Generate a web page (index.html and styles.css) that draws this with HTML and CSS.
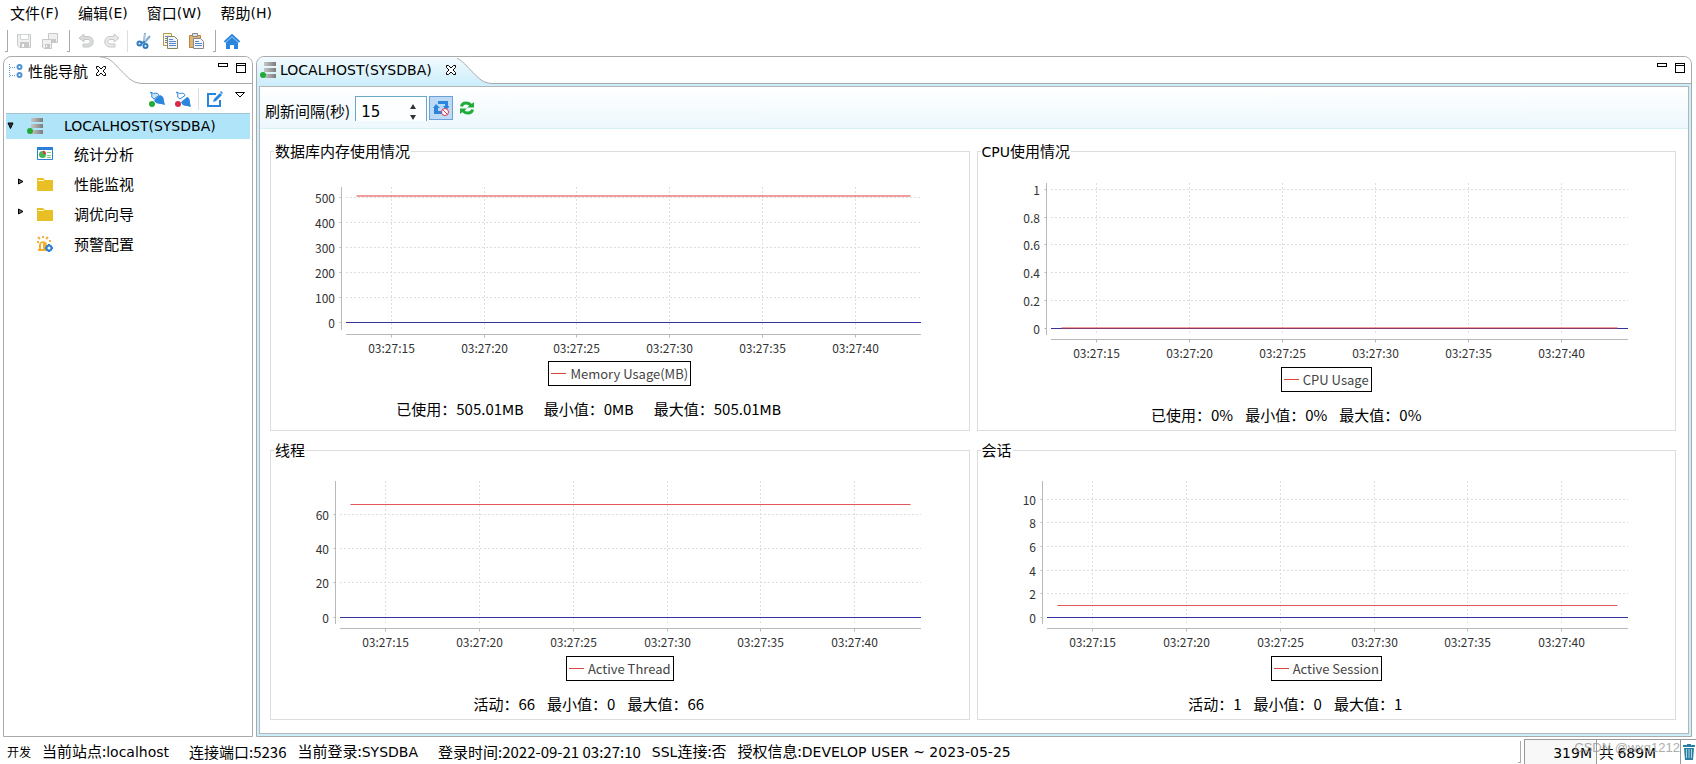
FILE: index.html
```html
<!DOCTYPE html>
<html lang="zh-CN">
<head>
<meta charset="utf-8">
<title>性能监视</title>
<link rel="stylesheet" href="styles.css">
</head>
<body>
<svg class="defs" aria-hidden="true">
  <defs>
    <linearGradient id="metal" x1="0" x2="1"><stop offset="0" stop-color="#c6c6c6"/><stop offset="1" stop-color="#7c7c7c"/></linearGradient>
    <linearGradient id="tabfill" x1="0" x2="0" y1="0" y2="1"><stop offset="0" stop-color="#f4fbfe"/><stop offset="1" stop-color="#cdeefb"/></linearGradient>
    <symbol id="server" viewBox="0 0 16 16"><path fill="url(#metal)" d="M4 0h12v4H4zM4 6h12v4H4zM4 12h12v4H4z"/><circle cx="3" cy="13" r="3" fill="#22ab38"/></symbol>
    <symbol id="close" viewBox="0 0 12 12"><path fill="#fff" stroke="#000" d="M1.500 1.500h2L6 4l2.500-2.500h2v2L8 6l2.500 2.500v2h-2L6 8l-2.500 2.500h-2v-2L4 6 1.500 3.500z"/></symbol>
    <symbol id="minmax" viewBox="0 0 28 12"><g fill="none" stroke="#000" shape-rendering="crispEdges"><path d="M.5 1.500h9v3h-9zM18.500 1.500h9v9h-9zM18.500 3.500h9"/></g></symbol>
    <symbol id="folder" viewBox="0 0 16 14"><path fill="#e8bf24" d="M0 1h6l2 2h8v11H0z"/><path d="M1 3.500h6" stroke="#fff6c8"/></symbol>
  </defs>
</svg>

<nav class="menubar">
  <button>文件<span class="lat">(F)</span></button>
  <button>编辑<span class="lat">(E)</span></button>
  <button>窗口<span class="lat">(W)</span></button>
  <button>帮助<span class="lat">(H)</span></button>
</nav>

<div class="toolbar">
  <span class="grip"></span>
  <button aria-label="保存" disabled><svg viewBox="0 0 16 16"><path fill="#f0f0f0" stroke="#c6c8c9" d="M1.500 1.500h13v13h-11l-2-2z"/><path fill="#fff" stroke="#d2d4d5" d="M4.500 1.500h8v5h-8z"/><path fill="#c6c8c9" d="M4 9h9v6H4z"/><path fill="#fff" d="M6 11h2v3H6z"/></svg></button>
  <button aria-label="全部保存" disabled><svg viewBox="0 0 16 16"><path fill="#f0f0f0" stroke="#c6c8c9" d="M6.500.5h9v9h-9z"/><path fill="#c6c8c9" d="M8 6h6v3H8z"/><path fill="#f0f0f0" stroke="#c6c8c9" d="M.5 6.500h9v9H2l-1.500-1.500z"/><path fill="#c6c8c9" d="M3 11h5v4H3z"/><path fill="#fff" d="M4 12h1v2H4z"/></svg></button>
  <span class="grip"></span>
  <button aria-label="撤销" disabled><svg viewBox="0 0 16 16"><path fill="#d9dbdc" stroke="#c6c8c9" d="M1 5l5-4v2.500h4c7 0 7 10.500 0 10.500H5v-3h5c3 0 3-4.500 0-4.500H6V9z"/></svg></button>
  <button aria-label="重做" disabled><svg viewBox="0 0 16 16"><path fill="#e8eaeb" stroke="#c6c8c9" d="M15 5l-5-4v2.500H6c-7 0-7 10.500 0 10.500h5v-3H6c-3 0-3-4.500 0-4.500h4V9z"/></svg></button>
  <span class="sep"></span>
  <button aria-label="剪切"><svg viewBox="0 0 16 16"><path d="M8 9l1-9M9 9l5-6" stroke="#7fa9cd" stroke-width="2"/><path d="M9 1v7" stroke="#d6e4f0"/><circle cx="3.500" cy="10.500" r="2" fill="none" stroke="#2f7dc1" stroke-width="2"/><circle cx="9.500" cy="13" r="2" fill="none" stroke="#2f7dc1" stroke-width="2"/><path d="M5 10l4-1" stroke="#2f7dc1" stroke-width="2"/></svg></button>
  <button aria-label="复制"><svg viewBox="0 0 16 16"><path fill="#fdf6dc" stroke="#b39a55" d="M1.500.5h8v12h-8z"/><path fill="#eef5fc" stroke="#8a8354" d="M5.500 3.500h7l3 3v9h-10z"/><path stroke="#5a86c4" d="M7 6.500h4M7 8.500h7M7 10.500h7M7 12.500h7M3 3.500h4M3 5.500h2M3 7.500h2M3 9.500h2"/></svg></button>
  <button aria-label="粘贴"><svg viewBox="0 0 16 16"><path fill="#e3b36e" stroke="#b58443" d="M1.500 2.500h11v12h-11z"/><path fill="#dfe3e6" stroke="#888" d="M4.500.5h5v3h-5z"/><path fill="#f3f7fc" stroke="#86888c" d="M5.500 5.500h7l3 3v7h-10z"/><path stroke="#5a86c4" d="M7 8.500h4M7 10.500h7M7 12.500h7"/></svg></button>
  <span class="grip"></span>
  <button aria-label="主页"><svg viewBox="0 0 16 16"><path fill="#2a86dc" d="M8 4l6 5.500V16h-4v-4H6v4H2V9.500z"/><path fill="none" stroke="#2a86dc" stroke-width="2" d="M.5 9L8 2l7.500 7"/></svg></button>
</div>

<main class="workbench">
  <section class="view nav-view">
    <header class="tabs">
      <div class="tab">
        <svg class="i16" viewBox="0 0 16 16"><path fill="none" stroke="#5e9bd6" stroke-dasharray="1 1" d="M1.500 1v13M2 4.500h6M2 12.500h6"/><g fill="#fff" stroke="#4f93d6" stroke-width="2"><circle cx="11.500" cy="4" r="2"/><circle cx="11.500" cy="12" r="2"/></g></svg>
        <span>性能导航</span>
        <button aria-label="关闭"><svg class="i12"><use href="#close"/></svg></button>
      </div>
      <svg class="curve" viewBox="0 0 42 27"><path fill="none" stroke="#aaa" d="M0 0C11 0 15 8 21 13.500S31 26 42 26.500"/></svg>
      <div class="rest"><svg class="minmax"><use href="#minmax"/></svg></div>
    </header>
    <div class="view-tools">
      <button aria-label="连接"><svg viewBox="0 0 16 16"><path fill="#cfe3f6" stroke="#2a86dc" d="M1.500 1l3 1.500c3-1 5 0 5.500 2L5 8C3 7 2 5 3 4z"/><path fill="#2a86dc" d="M5 9l6-5c3 1 4 3 4 6l1 4-4-1c-3 0-6-1-7-4z"/><circle cx="3" cy="13" r="3" fill="#22ab38"/></svg></button>
      <button aria-label="断开"><svg viewBox="0 0 16 16"><path fill="#fff" stroke="#2a86dc" d="M1.500 1l3 1.500c3-1 5 0 5.500 2L5 8C3 7 2 5 3 4z"/><path fill="#2a86dc" d="M6 11l6-5c3 1 3 4 3 6l1 4-4-1c-3 0-5-1-6-4z"/><circle cx="3" cy="13" r="3" fill="#d62a4c"/></svg></button>
      <span class="sep"></span>
      <button aria-label="编辑"><svg viewBox="0 0 16 16"><path fill="none" stroke="#2a86dc" stroke-width="2" d="M9 3H1v12h12V9"/><path d="M6 11l1-3 6-6 2 2-6 6z" fill="#2a86dc"/><path d="M14 0l2 2-1 1-2-2z" fill="#2a86dc"/></svg></button>
      <button class="menu" aria-label="菜单"><svg viewBox="0 0 10 6"><path fill="#fff" stroke="#000" d="M.5.5h9L5 5z"/></svg></button>
    </div>
    <ul class="tree">
      <li class="root"><svg class="arrow" viewBox="0 0 8 8"><path fill="#333" stroke="#000" d="M1 1h5L3.500 6.500z"/></svg><svg class="i16"><use href="#server"/></svg><span class="lat">LOCALHOST(SYSDBA)</span></li>
      <li><span class="arrow"></span><svg class="i16" viewBox="0 0 16 16"><path fill="#fff" stroke="#2a80d8" d="M.5 1.500h15v12H.5z"/><path fill="#2a80d8" d="M0 1h16v3H0z"/><circle cx="5.500" cy="8.500" r="3.500" fill="#45b754"/><path fill="#dc3c50" d="M6 8V4.500A3.500 3.500 0 0 1 9 8z"/><path stroke="#7bd07b" d="M10 6.500h4M10 9.500h4M10 11.500h4"/></svg>统计分析</li>
      <li><svg class="arrow" viewBox="0 0 8 8"><path fill="#666" stroke="#000" d="M1.500 1v5L6 3.500z"/></svg><svg class="i16" viewBox="0 0 16 14"><use href="#folder"/></svg>性能监视</li>
      <li><svg class="arrow" viewBox="0 0 8 8"><path fill="#666" stroke="#000" d="M1.500 1v5L6 3.500z"/></svg><svg class="i16" viewBox="0 0 16 14"><use href="#folder"/></svg>调优向导</li>
      <li><span class="arrow"></span><svg class="i16" viewBox="0 0 16 16"><path fill="#f5ae2b" d="M2 13V9c0-5 8-5 8 0v4h1v2H1v-2z"/><path fill="#fff" d="M4 9c0-2 1-2 2-2v6H4z"/><path stroke="#f0b040" stroke-width="2" d="M6 0v2M1 1l2 2M11 1L9 3M0 6h2M12 5h2"/><circle cx="12" cy="12" r="2.500" fill="#fff" stroke="#2a80d8" stroke-width="2"/><path stroke="#2a80d8" stroke-width="2" d="M12 8v2M12 14v2M8 12h2M14 12h2"/></svg>预警配置</li>
    </ul>
  </section>

  <section class="view editor">
    <header class="tabs">
      <div class="tab">
        <svg class="i16"><use href="#server"/></svg>
        <span class="lat">LOCALHOST(SYSDBA)</span>
        <button aria-label="关闭"><svg class="i12"><use href="#close"/></svg></button>
      </div>
      <svg class="curve" viewBox="0 0 42 27"><path fill="url(#tabfill)" d="M0 0C11 0 15 8 21 13.500S31 26 42 26.500V27H0z"/><path fill="none" stroke="#aaa" d="M0 0C11 0 15 8 21 13.500S31 26 42 26.500"/></svg>
      <div class="rest"><svg class="minmax"><use href="#minmax"/></svg></div>
    </header>
    <div class="editor-body">
      <div class="refresh-bar">
        <label for="interval">刷新间隔(秒)</label>
        <span class="spinner"><input id="interval" type="number" value="15"><svg viewBox="0 0 6 16"><path fill="#333" d="M3 0l3 5H0zM3 16l3-5H0z"/></svg></span>
        <button class="toggle" aria-label="停止自动刷新"><svg viewBox="0 0 16 16"><path fill="#2a86dc" d="M5 1h10v5h2l-4 4-3-4h2V4H5zM0 8l3-4 4 4H5v3h4v3H1V8z"/><circle cx="12" cy="12" r="3.500" fill="#fff" stroke="#d8344e"/><path stroke="#d8344e" d="M9.500 9.500l5 5"/></svg></button>
        <button aria-label="刷新"><svg viewBox="0 0 14 14"><g fill="none" stroke="#22ab38" stroke-width="3"><path d="M1.500 5.500C2 2.500 4 2 6 2c3 0 4 1 5 2.500M12.500 8.500C12 11.500 10 12 8 12c-3 0-4-1-5-2.500"/></g><path fill="#22ab38" d="M7 6.500h7V1zM7 7.500H0V13z"/></svg></button>
      </div>
      <div class="panels">
        <fieldset><legend>数据库内存使用情况</legend>
          <svg class="chart" data-chart="memory"></svg>
          <div class="key"><i></i>Memory Usage(MB)</div>
          <p class="stats wide"><span>已使用：505.01<span class="lat">MB</span></span><span>最小值：0<span class="lat">MB</span></span><span>最大值：505.01<span class="lat">MB</span></span></p>
        </fieldset>
        <fieldset><legend><span class="lat">CPU</span>使用情况</legend>
          <svg class="chart" data-chart="cpu"></svg>
          <div class="key"><i></i>CPU Usage</div>
          <p class="stats percent"><span>已使用：0%</span><span>最小值：0%</span><span>最大值：0%</span></p>
        </fieldset>
        <fieldset><legend>线程</legend>
          <svg class="chart" data-chart="thread"></svg>
          <div class="key"><i></i>Active Thread</div>
          <p class="stats"><span>活动：66</span><span>最小值：0</span><span>最大值：66</span></p>
        </fieldset>
        <fieldset><legend>会话</legend>
          <svg class="chart" data-chart="session"></svg>
          <div class="key"><i></i>Active Session</div>
          <p class="stats"><span>活动：1</span><span>最小值：0</span><span>最大值：1</span></p>
        </fieldset>
      </div>
    </div>
  </section>
</main>

<footer class="status">
  <span class="mode">开发</span>
  <span class="far">当前站点:<span class="lat">localhost</span></span>
  <span>连接端口:5236</span>
  <span class="far">当前登录:<span class="lat">SYSDBA</span></span>
  <span>登录时间:2022-09-21 03:27:10</span>
  <span><span class="lat">SSL</span>连接:否</span>
  <span>授权信息:<span class="lat">DEVELOP USER ~ 2023-05-25</span></span>
  <span class="grip end"></span>
  <div class="heap"><span class="used lat">319M</span><span class="total">共 <span class="lat">689M</span></span>
    <button aria-label="回收"><svg viewBox="0 0 12 16"><path fill="#2c7fa3" d="M4 0h4v1h4v2H0V1h4zM1 4h10l-1 12H2z"/><path stroke="#a8d4e4" d="M3.500 5v9M6 5v9M8.500 5v9"/></svg></button>
    <span class="watermark">CSDN @wxq1212</span>
  </div>
</footer>
<script src="charts.js"></script>
</body>
</html>
```
FILE: styles.css
```css
* { box-sizing: border-box; }
body {
  margin: 0;
  min-height: 100vh;
  display: flex;
  flex-direction: column;
  background: #fff;
  color: #000;
  font: 15px/22px "Noto Sans CJK SC", sans-serif;
}
.lat { font-family: "DejaVu Sans", sans-serif; font-size: 14px; }
.defs { position: absolute; width: 0; height: 0; }
button { padding: 0; border: 0; background: none; font: inherit; color: inherit; display: flex; align-items: center; }
svg { display: block; flex: none; }
.i16 { width: 16px; height: 16px; }
.i12 { width: 12px; height: 12px; }

.menubar { display: flex; gap: 19px; height: 26px; padding-left: 10px; align-items: center; }
.toolbar { display: flex; align-items: center; height: 30px; padding-left: 5px; }
.toolbar button { width: 26px; justify-content: center; }
.toolbar button svg { width: 16px; height: 16px; }
.grip { width: 3px; height: 22px; border: solid #aaa; border-width: 0 1px 1px 0; margin-right: 3px; }
.toolbar button + .grip { margin-left: 4px; }
.sep { width: 1px; height: 22px; background: #ddd; margin: 0 3px 0 2px; }

.workbench { flex: 1; display: flex; gap: 3px; padding: 0 4px 0 3px; }
.view { display: flex; flex-direction: column; border: 1px solid #aaa; border-radius: 8px 8px 0 0; overflow: hidden; }
.nav-view { width: 250px; flex: none; }
.editor { flex: 1; min-width: 0; background: #cdeefb; }
.tabs { display: flex; height: 27px; flex: none; }
.tab { position: relative; display: flex; align-items: center; gap: 4px; padding-left: 4px; }
.tab button { margin-left: 3px; }
.nav-view .tab { padding-top: 1px; }
.editor .tab { padding: 0 0 2px 3px; background: linear-gradient(#f4fbfe, #cdeefb); }
.editor .tab button { margin-left: 9px; }
.curve { width: 42px; height: 27px; margin-left: -7px; }
.editor .curve { background: #fff; }
.rest { flex: 1; border-bottom: 1px solid #aaa; background: #fff; display: flex; justify-content: flex-end; padding: 5px 6px 0 0; }
.minmax { width: 28px; height: 12px; }

.view-tools { display: flex; justify-content: flex-end; align-items: center; height: 29px; }
.view-tools button { width: 26px; justify-content: center; }
.view-tools button svg { width: 16px; height: 16px; }
.view-tools .menu { width: 24px; margin-bottom: 8px; }
.view-tools .menu svg { width: 10px; height: 6px; }

.tree { list-style: none; margin: 0 2px; padding: 0; }
.tree li { display: flex; align-items: center; height: 30px; padding-left: 11px; }
.tree .arrow { width: 8px; height: 8px; margin: 0 12px 4px 0; flex: none; }
.tree .i16 { margin-right: 21px; }
.tree .root { height: 26px; padding: 0 0 2px 1px; background: #b0e5f9; border-top: 1px solid #a3c3cf; }
.tree .root .arrow { margin-bottom: 0; }

.editor-body { flex: 1; margin: 2px; background: #fff; border: 1px solid #b5b5b5; }
.refresh-bar { display: flex; align-items: flex-start; height: 42px; padding: 9px 5px 0; border-bottom: 1px solid #d8f1f5; background: linear-gradient(#fff, #edf8fd); }
.refresh-bar label { padding-top: 4px; margin-right: 5px; }
.spinner { display: flex; align-items: center; width: 72px; height: 25px; border: solid #68a9c4; border-width: 1px 1px 0; background: #fcfeff; margin-right: 2px; }
.spinner input { width: 54px; padding: 6px 0 0 5px; border: 0; outline: 0; background: none; font: 15px/18px "DejaVu Sans", sans-serif; appearance: textfield; }
.spinner input::-webkit-inner-spin-button { display: none; }
.spinner svg { width: 6px; height: 16px; margin-top: 5px; }
.refresh-bar .toggle { width: 24px; height: 24px; margin-right: 7px; justify-content: center; border: 1px solid #6da0d6; background: #bcd9f5; }
.refresh-bar button svg { width: 16px; height: 16px; }
.refresh-bar button:last-child { height: 24px; }
.refresh-bar button:last-child svg { width: 14px; height: 14px; }

.panels { display: grid; grid-template-columns: 1fr 1fr; column-gap: 7px; row-gap: 8px; padding: 11px 12px 12px 10px; }
fieldset { min-width: 0; margin: 0; padding: 0 0 4px; border: 1px solid #ddd; }
legend { padding: 0 1px; margin-left: 3px; }
.chart { width: 100%; overflow: visible; }
.chart .grid { stroke: #dedede; stroke-dasharray: 2 2; }
.chart .axis { stroke: #b9b9b9; fill: none; }
.chart .zero { stroke: #34349c; }
.chart .series { stroke: #e4565a; }
.chart .series.soft { stroke: #e23c3c; stroke-opacity: .5; stroke-width: 2; }
.chart text { font: 12px "Noto Sans CJK SC", sans-serif; fill: #333; }
.key { display: flex; align-items: center; gap: 4px; width: fit-content; height: 25px; margin: 5px auto 0; padding: 0 2px; border: 1px solid #000; color: #444; font-size: 13px; }
.key i { width: 15px; height: 1px; background: #d8473f; }
.stats { display: flex; justify-content: center; gap: 12px; margin: 12px 0 0; padding-right: 62px; }
.stats.wide { gap: 20px; }
.stats.percent { padding-right: 80px; }

.status { display: flex; align-items: center; gap: 11px; height: 27px; padding: 2px 0 0 7px; white-space: nowrap; }
.status .mode { font-size: 12px; }
.status .far { margin-right: 9px; }
.status .end { margin: 0 -8px 0 auto; }
.heap { position: relative; display: flex; align-self: stretch; align-items: center; border: solid #999; border-width: 1px 0 0 1px; }
.heap .used { width: 72px; align-self: stretch; padding: 2px 4px 0 0; text-align: right; border-right: 1px solid #999; background: #f8f8f8; }
.heap .total { width: 83px; padding-left: 2px; }
.heap button { width: 16px; align-self: stretch; border-left: 1px solid #999; }
.heap button svg { width: 12px; height: 16px; margin: 0 auto; }
.watermark { position: absolute; right: 16px; top: -2px; color: #999; opacity: .8; font: 13px/20px "Liberation Sans", sans-serif; }
```
FILE: charts.js
```javascript
const TIME = { min: 12.55, max: 43.55, ticks: [15, 20, 25, 30, 35, 40] };
const RIGHT = 48;
const CHARTS = {
  memory:  { height: 194, top: 25, bottom: 168, axis: 70, min: -30, max: 542, ticks: [0, 100, 200, 300, 400, 500], value: 505.01, soft: true },
  cpu:     { height: 199, top: 20, bottom: 172, axis: 68, min: -0.05, max: 1.045, ticks: [0, 0.2, 0.4, 0.6, 0.8, 1], value: 0, soft: true },
  thread:  { height: 190, top: 20, bottom: 163, axis: 64, min: -4, max: 79.6, ticks: [0, 20, 40, 60], value: 66 },
  session: { height: 190, top: 20, bottom: 163, axis: 64, min: -0.57, max: 11.55, ticks: [0, 2, 4, 6, 8, 10], value: 1 }
};

function line(cls, x1, y1, x2, y2) {
  return `<line class="${cls}" x1="${x1}" y1="${y1}" x2="${x2}" y2="${y2}"/>`;
}

function draw(svg) {
  const c = CHARTS[svg.dataset.chart];
  svg.style.height = c.height + "px";
  const left = c.axis + 5;
  const right = Math.round(svg.getBoundingClientRect().width) - RIGHT;
  const px = t => Math.floor(left + (t - TIME.min) / (TIME.max - TIME.min) * (right - left)) + 0.5;
  const py = v => Math.floor(c.bottom - (v - c.min) / (c.max - c.min) * (c.bottom - c.top)) + 0.5;
  const ax = c.axis + 0.5;
  const base = c.bottom + 4.5;
  let out = "";
  for (const v of c.ticks) {
    const y = py(v);
    out += line("grid", left, y, right, y) + line("axis", ax - 2, y, ax, y);
    out += `<text x="${c.axis - 6}" y="${y + 5}" text-anchor="end">${v}</text>`;
  }
  for (const t of TIME.ticks) {
    const x = px(t);
    out += line("grid", x, c.top, x, c.bottom) + line("axis", x, base, x, base + 3);
    out += `<text x="${x}" y="${base + 18}" text-anchor="middle">03:27:${t}</text>`;
  }
  out += line("axis", ax, c.top, ax, c.bottom) + line("axis", left, base, right, base);
  out += line("zero", left, py(0), right, py(0));
  const y = py(c.value) - (c.soft ? 0.5 : 0);
  out += line(c.soft ? "series soft" : "series", px(13.1), y, px(43), y);
  svg.innerHTML = out;
}

function drawAll() {
  document.querySelectorAll(".chart").forEach(draw);
}

drawAll();
window.addEventListener("resize", drawAll);
```
